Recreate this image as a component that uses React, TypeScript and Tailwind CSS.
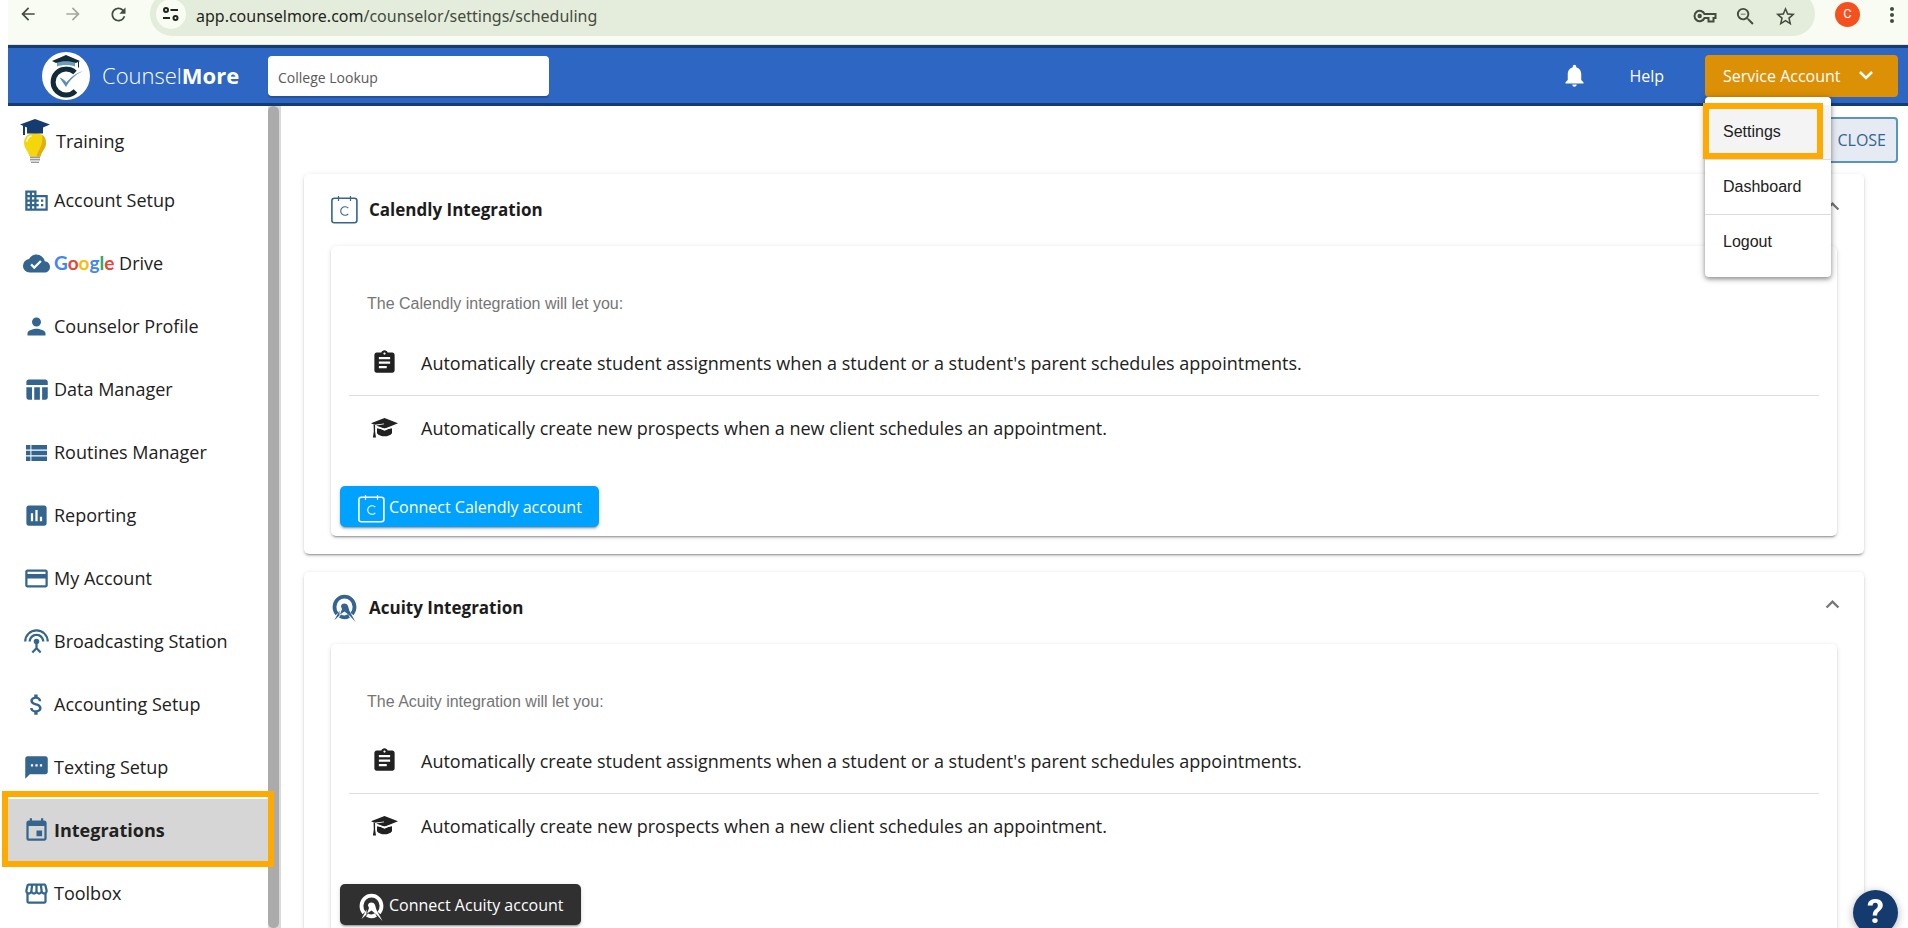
import React from "react";
import {
  MdArrowBack,
  MdArrowForward,
  MdAssessment,
  MdAssignment,
  MdAttachMoney,
  MdBusiness,
  MdCloudDone,
  MdCreditCard,
  MdEvent,
  MdExpandLess,
  MdMoreVert,
  MdNotifications,
  MdPerson,
  MdRefresh,
  MdSettingsInputAntenna,
  MdStarBorder,
  MdStorefront,
  MdTableChart,
  MdTextsms,
  MdZoomOut,
} from "react-icons/md";

const CARD_SHADOW =
  "shadow-[0_3px_1px_-2px_rgba(0,0,0,0.2),0_2px_2px_0_rgba(0,0,0,0.14),0_1px_5px_0_rgba(0,0,0,0.12)]";

function TuneIcon() {
  return (
    <svg width="18" height="18" viewBox="0 0 18 18" fill="none" stroke="#1f261c" strokeWidth="2">
      <circle cx="4" cy="5" r="2" />
      <path d="M8.500 5H16M1 13h7" />
      <circle cx="13.500" cy="13" r="2" />
    </svg>
  );
}

function KeyIcon() {
  return (
    <svg width="24" height="14" viewBox="0 0 24 14" fill="none" stroke="#444b3f" strokeWidth="2">
      <path d="M11.500 5A5.200 5.200 0 1 0 11.500 9H15.500V12.500H20.500V9H22.500V5Z" />
      <circle cx="6.700" cy="7" r="2.200" fill="#444b3f" stroke="none" />
    </svg>
  );
}

function BrandLogo() {
  return (
    <svg width="48" height="48" viewBox="0 0 48 48" aria-hidden="true">
      <circle cx="24" cy="24" r="24" fill="#fff" />
      <path
        d="M33 20.500A13 13 0 1 0 33.500 39"
        fill="none"
        stroke="#122b38"
        strokeWidth="5"
      />
      <path d="M13 9h22v7.500c-5-3-15-3-22 0z" fill="#fff" />
      <path d="M15 9.500c5 -2 13 -2 18 0v5c-5-2-13-2-18 0z" fill="#6c9dbd" />
      <path d="M24 3 38 9l-4 2c-6-2.500-14-2.500-20 0l-4-2z" fill="#122b38" />
      <path d="M36.500 9.500v6" stroke="#122b38" strokeWidth="1" />
      <path d="M17.500 25.500l6.500 9.500c4-7 9-12.500 17-16-8 2.500-13 7-16.500 11.500-2-2.500-4-4-7-5z" fill="#5b8fb6" />
    </svg>
  );
}

function TrainingIcon() {
  return (
    <svg width="30" height="45" viewBox="0 0 30 45" aria-hidden="true">
      <path d="M15 14c-7 0-11 4-11 10 0 5 4 7.500 5.500 13.500h11C22 31.500 26 29 26 24c0-6-4-10-11-10z" fill="#f4d60c" />
      <path d="M22 15.500c3 2 4 5 4 8.500 0 5-4 7.500-5.500 13.500h-4C18 30 24 27 22 15.500z" fill="#dcae1c" />
      <path d="M7 22c.500-3 2-4.500 4-5" fill="none" stroke="#fff" strokeWidth="1.500" strokeLinecap="round" />
      <path d="M10 37.500h10v4H10zM11 42.500h8v1.500h-8z" fill="#9a9a9a" />
      <path d="M10 39.500h10M10 42h9" stroke="#ddd" />
      <path d="M15 0 30 5.500 23 8.500v6H7v-6L0 5.500z" fill="#163b70" />
      <path d="M4 7v9" stroke="#163b70" strokeWidth="2" />
    </svg>
  );
}

function RoutinesIcon() {
  return (
    <svg width="21" height="16" viewBox="0 0 21 16" fill="currentColor">
      <path d="M0 0h4.400v4.600H0zM5.400 0H21v4.600H5.400zM0 5.700h4.400v4.600H0zM5.400 5.700H21v4.600H5.400zM0 11.400h4.400V16H0zM5.400 11.400H21V16H5.400z" />
    </svg>
  );
}

function GraduateIcon() {
  return (
    <svg width="27" height="20" viewBox="0 0 27 20" fill="currentColor" className="shrink-0" aria-hidden="true">
      <path d="M13.500 0 27 5.300 13.500 10.800 5.200 7.500 13 6.200v-.8L3.400 6.800 0 5.300z" />
      <path d="M6 9.200l7.500 3.600L21 9.200v6c-1.600 2.200-4.400 3.100-7.500 3.100s-5.900-.9-7.500-3.100z" />
      <path d="M2.600 6.800l1.500.4v6.300l.9 5.900H1.900l.9-5.900z" />
      <path d="M6 9.600l7.500 1.500 7.500-1.500" fill="none" stroke="#fff" strokeWidth="1.200" />
    </svg>
  );
}

function CalendlyIcon() {
  return (
    <svg width="27" height="28" viewBox="0 0 27 28" fill="none" stroke="currentColor" aria-hidden="true">
      <rect x="0.900" y="2.200" width="25" height="24.500" rx="2.500" strokeWidth="1.600" />
      <path d="M7.500 0v5M19.500 0v5" strokeWidth="1.200" />
      <path d="M17.300 12.200a4.300 4.300 0 1 0 0 5.600" strokeWidth="1.100" />
    </svg>
  );
}

function AcuityIcon() {
  return (
    <svg width="27" height="28" viewBox="0 0 27 28" fill="none" stroke="currentColor" aria-hidden="true">
      <path d="M6 20A10 10.500 0 1 1 21 20" strokeWidth="3.800" />
      <path d="M9 22c2.500 1.600 6 1.600 9 0" strokeWidth="3.800" />
      <path d="M10 12.500c0-3.500 5.500-4 7-.5l1.500 5L24.500 28 19 22l-5.500-4.500L9 20.500l2-5.500z" fill="currentColor" stroke="none" />
      <path d="M8.500 16.500 3.500 26l5-4.500z" fill="currentColor" stroke="none" />
    </svg>
  );
}

function GoogleWord() {
  return (
    <span className="font-['Lato',sans-serif] text-[19px] font-bold">
      <span className="text-[#4285f4]">G</span>
      <span className="text-[#ea4335]">o</span>
      <span className="text-[#fbbc05]">o</span>
      <span className="text-[#4285f4]">g</span>
      <span className="text-[#34a853]">l</span>
      <span className="text-[#ea4335]">e</span>
    </span>
  );
}

const NAV: { label: string; icon: React.ReactNode; google?: boolean; active?: boolean }[] = [
  { label: "Account Setup", icon: <MdBusiness size={27} /> },
  { label: "Drive", icon: <MdCloudDone size={27} />, google: true },
  { label: "Counselor Profile", icon: <MdPerson size={27} /> },
  { label: "Data Manager", icon: <MdTableChart size={27} /> },
  { label: "Routines Manager", icon: <RoutinesIcon /> },
  { label: "Reporting", icon: <MdAssessment size={27} /> },
  { label: "My Account", icon: <MdCreditCard size={27} /> },
  { label: "Broadcasting Station", icon: <MdSettingsInputAntenna size={27} /> },
  { label: "Accounting Setup", icon: <MdAttachMoney size={27} /> },
  { label: "Texting Setup", icon: <MdTextsms size={27} /> },
  { label: "Integrations", icon: <MdEvent size={27} />, active: true },
  { label: "Toolbox", icon: <MdStorefront size={27} /> },
];

function BrowserBar() {
  return (
    <div className="flex h-[45px] shrink-0 items-end overflow-hidden border-b border-[#dfe5d8] bg-[#f8fcf2] pb-2 pl-[10px] text-[#444b3f]">
      <div className="flex h-11 w-[132px] shrink-0 items-center gap-[25px]">
        <button aria-label="Back"><MdArrowBack size={20} /></button>
        <button aria-label="Forward" className="text-[#a4a8a0]"><MdArrowForward size={20} /></button>
        <button aria-label="Reload"><MdRefresh size={21} /></button>
      </div>
      <div className="flex h-11 flex-1 items-center rounded-full bg-[#e4eddb] pl-[6px] pr-[18px]">
        <button aria-label="Site information" className="flex size-[30px] items-center justify-center rounded-full bg-[#f8fcf2]">
          <TuneIcon />
        </button>
        <span className="ml-[10px] flex-1 pt-1 font-['Noto_Sans',sans-serif] text-base text-[#444b3f]">
          <span className="text-[#1f261c]">app.counselmore.com</span>/counselor/settings/scheduling
        </span>
        <div className="flex items-center gap-[17px] pt-1">
          <button aria-label="Passwords"><KeyIcon /></button>
          <button aria-label="Zoom"><MdZoomOut size={23} /></button>
          <button aria-label="Bookmark"><MdStarBorder size={23} /></button>
        </div>
      </div>
      <div className="flex h-11 w-[93px] shrink-0 items-center justify-between pl-5 pr-1">
        <button className="flex size-[25px] items-center justify-center rounded-full bg-[#f4511e] font-['Roboto',sans-serif] text-[13px] text-white">
          C
        </button>
        <button aria-label="Browser menu" className="pt-[2px]"><MdMoreVert size={24} /></button>
      </div>
    </div>
  );
}

function AccountMenu() {
  return (
    <div className="relative">
      <button className="flex h-[42px] w-[193px] items-center justify-between rounded-[4px] bg-[#dc9005] pl-[18px] pr-[25px] text-base font-medium text-white">
        Service Account
        <svg width="14" height="9" viewBox="0 0 14 9" fill="none" stroke="#fff" strokeWidth="2.500">
          <path d="M1 1l6 6 6-6" />
        </svg>
      </button>
      <ul className="absolute left-0 top-full z-20 w-[126px] rounded-[4px] bg-white py-2 font-['Liberation_Sans',sans-serif] text-base text-[#212121] shadow-[0_2px_4px_rgba(0,0,0,0.35),0_1px_8px_rgba(0,0,0,0.2)]">
        <li className="relative border-b border-[#dcdcdc] bg-[#f4f4f4]">
          <a href="#settings" className="flex h-[54px] items-center px-[18px]">Settings</a>
          <span className="pointer-events-none absolute -left-[2px] -top-[2px] h-14 w-30 border-[6px] border-[#ffaa00]" />
        </li>
        <li className="border-b border-[#dcdcdc]">
          <a href="#dashboard" className="flex h-[54px] items-center px-[18px]">Dashboard</a>
        </li>
        <li>
          <a href="#logout" className="flex h-[54px] items-center px-[18px]">Logout</a>
        </li>
      </ul>
    </div>
  );
}

function Header() {
  return (
    <header className="flex h-[61px] shrink-0 items-center border-y-[3px] border-[#173d70] bg-[#2d66c3] pl-[34px] pr-[10px] text-white">
      <BrandLogo />
      <a href="#home" className="ml-3 w-[166px] text-[22px] font-light">
        Counsel<span className="font-bold">More</span>
      </a>
      <input
        aria-label="College Lookup"
        placeholder="College Lookup"
        className="h-10 w-[281px] rounded-[4px] bg-white px-[10px] pt-1 text-sm text-[#444] shadow-[0_2px_1px_rgba(0,0,0,0.2)] outline-none placeholder:text-[#5a5a5a]"
      />
      <div className="ml-auto flex items-center">
        <button aria-label="Notifications"><MdNotifications size={27} /></button>
        <a href="#help" className="ml-[41px] mr-[41px] text-base font-medium">Help</a>
        <AccountMenu />
      </div>
    </header>
  );
}

function Sidebar() {
  return (
    <nav className="flex w-[273px] shrink-0 text-lg text-[#212121]">
      <div className="min-w-0 flex-1">
        <a href="#training" className="flex h-[63px] items-center gap-[6px] pl-3 pt-[7px]">
          <TrainingIcon />
          Training
        </a>
        {NAV.map((item) => (
          <a
            key={item.label}
            href="#nav"
            className={
              item.active
                ? "relative flex h-[63px] items-center bg-[#d6d6d6] pl-[15px] font-bold"
                : "flex h-[63px] items-center pl-[15px]"
            }
          >
            <span className="mr-1 flex w-[27px] justify-center text-[#34658f]">{item.icon}</span>
            <span className="pb-[2px]">
              {item.google && <><GoogleWord />{" "}</>}
              {item.label}
            </span>
            {item.active && (
              <span className="pointer-events-none absolute -bottom-[5px] -left-[6px] -right-[6px] -top-2 z-10 border-[6px] border-[#ffaa00]" />
            )}
          </a>
        ))}
      </div>
      <div className="w-[13px] bg-[#d9d9d9]">
        <div className="h-full w-[11px] rounded-full bg-[#ababab]" />
      </div>
    </nav>
  );
}

function IntegrationCard({
  name,
  icon,
  buttonClass,
}: {
  name: string;
  icon: React.ReactNode;
  buttonClass: string;
}) {
  return (
    <section className={`rounded-[5px] bg-white px-[27px] pb-[18px] ${CARD_SHADOW}`}>
      <div className="flex h-[72px] items-center">
        <span className="text-[#34658f]">{icon}</span>
        <h2 className="ml-[11px] flex-1 text-[17px] font-bold text-[#1c1c1c]">{name} Integration</h2>
        <button aria-label={`Collapse ${name}`} className="-mr-[9px] pb-2 text-[#757575]">
          <MdExpandLess size={27} />
        </button>
      </div>
      <div className={`rounded-[5px] bg-white px-[9px] pb-[9px] pt-[46px] ${CARD_SHADOW}`}>
        <p className="pl-[27px] font-['Liberation_Sans',sans-serif] text-base text-[#757575]">
          The {name} integration will let you:
        </p>
        <ul className="mx-[9px] text-lg text-[#212121]">
          <li className="flex h-[80px] items-center border-b border-[#dedede] pl-[22px] pt-[14px]">
            <MdAssignment size={27} className="shrink-0" />
            <span className="ml-[23px]">
              Automatically create student assignments when a student or a student's parent schedules appointments.
            </span>
          </li>
          <li className="flex h-16 items-center pl-[22px]">
            <GraduateIcon />
            <span className="ml-[23px]">
              Automatically create new prospects when a new client schedules an appointment.
            </span>
          </li>
        </ul>
        <button className={`mt-[26px] flex h-[41px] items-center rounded-[5px] pl-[18px] pr-[17px] text-base font-medium text-white ${buttonClass} ${CARD_SHADOW}`}>
          <span className="mr-1 pt-1">{icon}</span>
          Connect {name} account
        </button>
      </div>
    </section>
  );
}

export default function App() {
  return (
    <div className="flex h-screen flex-col overflow-hidden bg-white pl-2 font-['Open_Sans','Noto_Sans',sans-serif]">
      <BrowserBar />
      <Header />
      <div className="flex min-h-0 flex-1">
        <Sidebar />
        <main className="min-w-0 flex-1 pl-[23px] pr-[10px] pt-[11px]">
          <div className="flex h-14 items-start justify-end">
            <button className="h-[46px] rounded-[4px] border-2 border-[#5796ba] bg-[#e5eaf3] px-[10px] text-base font-medium text-[#34658f]">
              CLOSE
            </button>
          </div>
          <div className="mr-[34px] mt-px flex flex-col gap-[18px]">
            <IntegrationCard name="Calendly" icon={<CalendlyIcon />} buttonClass="bg-[#00a2ff]" />
            <IntegrationCard name="Acuity" icon={<AcuityIcon />} buttonClass="bg-[#303030]" />
          </div>
        </main>
      </div>
      <button
        aria-label="Help center"
        className="fixed -bottom-[7px] right-[10px] z-30 flex size-[45px] items-center justify-center rounded-full bg-[#153a6e] pb-1 font-['Roboto',sans-serif] text-[34px] font-bold leading-none text-white shadow-[0_2px_8px_rgba(0,0,0,0.3)]"
      >
        ?
      </button>
    </div>
  );
}
